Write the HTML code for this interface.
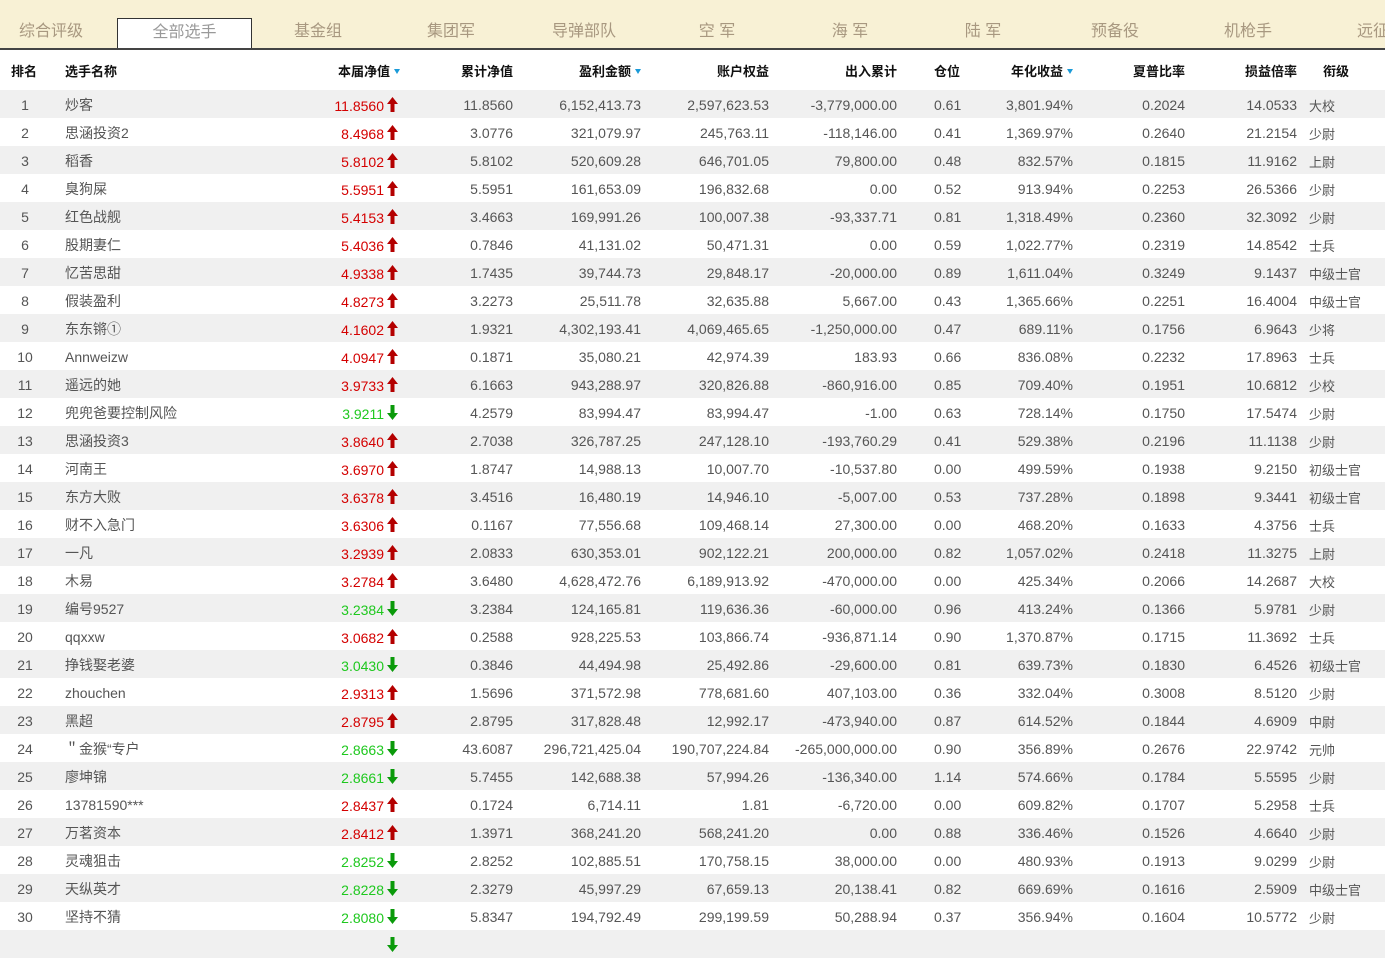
<!DOCTYPE html>
<html><head><meta charset="utf-8">
<style>
*{margin:0;padding:0;box-sizing:border-box}
body{width:1385px;height:939px;overflow:hidden;background:#fff;font-family:"Liberation Sans","Noto Sans CJK SC",sans-serif;color:#555;font-size:14px}
.top{position:absolute;left:0;top:0;width:1385px;height:50px;background:#f8f1d5;border-bottom:2px solid #444;overflow:hidden}
.tab{position:absolute;top:18px;height:32px;line-height:28px;font-size:16px;color:#a89880;text-align:center;width:134px}
.tab.act{background:#fff;border:1px solid #333;border-bottom:none;height:32px;color:#999;top:18px}
table{position:absolute;left:0;top:50px;border-collapse:collapse;table-layout:fixed;width:1385px}
td,th{height:28px;white-space:nowrap;padding:0}
td{padding-top:2px}
th{height:40px;font-weight:bold;color:#111;font-size:13px}
tr.g td{background:#f0f0f0}
.r{text-align:right}
.l{text-align:left}
.up{color:#d40000}
.dn{color:#1ec81e}
svg{vertical-align:-1px;margin-left:3px}
.tri{display:inline-block;width:0;height:0;border-left:3px solid transparent;border-right:3px solid transparent;border-top:5px solid #1a9ad8;margin-left:4px;vertical-align:2px}
</style></head><body>
<div class="top">
<div class="tab" style="left:-16px">综合评级</div>
<div class="tab act" style="left:117px;width:135px">全部选手</div>
<div class="tab" style="left:251px">基金组</div>
<div class="tab" style="left:384px">集团军</div>
<div class="tab" style="left:517px">导弹部队</div>
<div class="tab" style="left:650px">空 军</div>
<div class="tab" style="left:783px">海 军</div>
<div class="tab" style="left:916px">陆 军</div>
<div class="tab" style="left:1048px">预备役</div>
<div class="tab" style="left:1181px">机枪手</div>
<div class="tab" style="left:1314px">远征军</div>
</div>
<svg width="0" height="0" style="position:absolute"><defs>
<symbol id="u" viewBox="0 0 11 15"><path d="M5.5 0L11 7H7.5V15H3.5V7H0Z" fill="#b40000"/></symbol>
<symbol id="d" viewBox="0 0 11 15"><path d="M5.5 15L11 8H7.5V0H3.5V8H0Z" fill="#0a9a0a"/></symbol>
</defs></svg>
<table>
<colgroup><col style="width:50px"><col style="width:250px"><col style="width:100px"><col style="width:113px"><col style="width:128px"><col style="width:128px"><col style="width:128px"><col style="width:103px"><col style="width:73px"><col style="width:112px"><col style="width:112px"><col style="width:88px"></colgroup>
<tr><th class="l" style="padding-left:11px">排名</th><th class="l" style="padding-left:15px">选手名称</th><th class="r">本届净值<span class="tri"></span></th><th class="r">累计净值</th><th class="r" style="padding-right:0">盈利金额<span class="tri"></span></th><th class="r">账户权益</th><th class="r">出入累计</th><th class="l" style="padding-left:37px">仓位</th><th class="r">年化收益<span class="tri"></span></th><th class="r">夏普比率</th><th class="r">损益倍率</th><th class="l" style="padding-left:26px">衔级</th></tr>
</table>
<table id="t" style="top:90px"></table>
<script>
var D=[
["炒客","11.8560",1,"11.8560","6,152,413.73","2,597,623.53","-3,779,000.00","0.61","3,801.94%","0.2024","14.0533","大校"],
["思涵投资2","8.4968",1,"3.0776","321,079.97","245,763.11","-118,146.00","0.41","1,369.97%","0.2640","21.2154","少尉"],
["稻香","5.8102",1,"5.8102","520,609.28","646,701.05","79,800.00","0.48","832.57%","0.1815","11.9162","上尉"],
["臭狗屎","5.5951",1,"5.5951","161,653.09","196,832.68","0.00","0.52","913.94%","0.2253","26.5366","少尉"],
["红色战舰","5.4153",1,"3.4663","169,991.26","100,007.38","-93,337.71","0.81","1,318.49%","0.2360","32.3092","少尉"],
["股期妻仁","5.4036",1,"0.7846","41,131.02","50,471.31","0.00","0.59","1,022.77%","0.2319","14.8542","士兵"],
["忆苦思甜","4.9338",1,"1.7435","39,744.73","29,848.17","-20,000.00","0.89","1,611.04%","0.3249","9.1437","中级士官"],
["假装盈利","4.8273",1,"3.2273","25,511.78","32,635.88","5,667.00","0.43","1,365.66%","0.2251","16.4004","中级士官"],
["东东锵①","4.1602",1,"1.9321","4,302,193.41","4,069,465.65","-1,250,000.00","0.47","689.11%","0.1756","6.9643","少将"],
["Annweizw","4.0947",1,"0.1871","35,080.21","42,974.39","183.93","0.66","836.08%","0.2232","17.8963","士兵"],
["遥远的她","3.9733",1,"6.1663","943,288.97","320,826.88","-860,916.00","0.85","709.40%","0.1951","10.6812","少校"],
["兜兜爸要控制风险","3.9211",0,"4.2579","83,994.47","83,994.47","-1.00","0.63","728.14%","0.1750","17.5474","少尉"],
["思涵投资3","3.8640",1,"2.7038","326,787.25","247,128.10","-193,760.29","0.41","529.38%","0.2196","11.1138","少尉"],
["河南王","3.6970",1,"1.8747","14,988.13","10,007.70","-10,537.80","0.00","499.59%","0.1938","9.2150","初级士官"],
["东方大败","3.6378",1,"3.4516","16,480.19","14,946.10","-5,007.00","0.53","737.28%","0.1898","9.3441","初级士官"],
["财不入急门","3.6306",1,"0.1167","77,556.68","109,468.14","27,300.00","0.00","468.20%","0.1633","4.3756","士兵"],
["一凡","3.2939",1,"2.0833","630,353.01","902,122.21","200,000.00","0.82","1,057.02%","0.2418","11.3275","上尉"],
["木易","3.2784",1,"3.6480","4,628,472.76","6,189,913.92","-470,000.00","0.00","425.34%","0.2066","14.2687","大校"],
["编号9527","3.2384",0,"3.2384","124,165.81","119,636.36","-60,000.00","0.96","413.24%","0.1366","5.9781","少尉"],
["qqxxw","3.0682",1,"0.2588","928,225.53","103,866.74","-936,871.14","0.90","1,370.87%","0.1715","11.3692","士兵"],
["挣钱娶老婆","3.0430",0,"0.3846","44,494.98","25,492.86","-29,600.00","0.81","639.73%","0.1830","6.4526","初级士官"],
["zhouchen","2.9313",1,"1.5696","371,572.98","778,681.60","407,103.00","0.36","332.04%","0.3008","8.5120","少尉"],
["黑超","2.8795",1,"2.8795","317,828.48","12,992.17","-473,940.00","0.87","614.52%","0.1844","4.6909","中尉"],
["＂金猴“专户","2.8663",0,"43.6087","296,721,425.04","190,707,224.84","-265,000,000.00","0.90","356.89%","0.2676","22.9742","元帅"],
["廖坤锦","2.8661",0,"5.7455","142,688.38","57,994.26","-136,340.00","1.14","574.66%","0.1784","5.5595","少尉"],
["13781590***","2.8437",1,"0.1724","6,714.11","1.81","-6,720.00","0.00","609.82%","0.1707","5.2958","士兵"],
["万茗资本","2.8412",1,"1.3971","368,241.20","568,241.20","0.00","0.88","336.46%","0.1526","4.6640","少尉"],
["灵魂狙击","2.8252",0,"2.8252","102,885.51","170,758.15","38,000.00","0.00","480.93%","0.1913","9.0299","少尉"],
["天纵英才","2.8228",0,"2.3279","45,997.29","67,659.13","20,138.41","0.82","669.69%","0.1616","2.5909","中级士官"],
["坚持不猜","2.8080",0,"5.8347","194,792.49","299,199.59","50,288.94","0.37","356.94%","0.1604","10.5772","少尉"],
["","",0,"","","","","","","","",""]];
var h='<colgroup><col style="width:50px"><col style="width:250px"><col style="width:100px"><col style="width:113px"><col style="width:128px"><col style="width:128px"><col style="width:128px"><col style="width:103px"><col style="width:73px"><col style="width:112px"><col style="width:112px"><col style="width:88px"></colgroup>';
D.forEach(function(r,i){
var ar='<svg width="11" height="15"><use href="#'+(r[2]?'u':'d')+'"/></svg>';
h+='<tr class="'+(i%2==0?'g':'')+'"><td style="text-align:center">'+(r[0]?i+1:'')+'</td><td style="padding-left:15px">'+r[0]+'</td><td class="r" style="padding-right:2px"><span class="'+(r[2]?'up':'dn')+'">'+r[1]+'</span>'+(r[0]||i==30?ar:'')+'</td><td class="r">'+r[3]+'</td><td class="r">'+r[4]+'</td><td class="r">'+r[5]+'</td><td class="r">'+r[6]+'</td><td style="padding-left:37px">'+r[7]+'</td><td class="r">'+r[8]+'</td><td class="r">'+r[9]+'</td><td class="r">'+r[10]+'</td><td style="padding-left:12px;font-size:13px">'+r[11]+'</td></tr>';
});
document.getElementById('t').innerHTML=h;
</script>
</body></html>
